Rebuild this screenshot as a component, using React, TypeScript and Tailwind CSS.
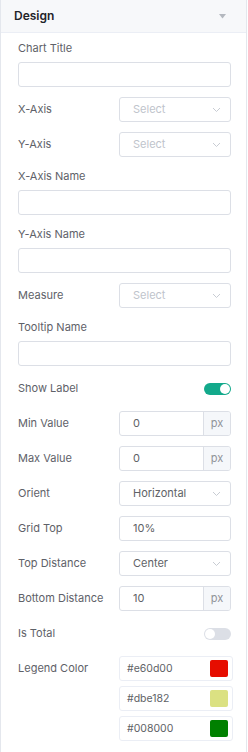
import React from "react";

const Chevron = () => (
  <svg width="9" height="6" viewBox="0 0 9 6" fill="none" className="shrink-0">
    <path d="M1 1l3.5 3.5L8 1" stroke="#c8ccd3" strokeWidth="1" />
  </svg>
);

const Label = ({ children }: { children: React.ReactNode }) => (
  <span className="text-[11px] text-[#5e6168]">{children}</span>
);

const TextInput = () => (
  <div className="h-[25px] w-full rounded-[3px] border border-[#dcdfe6] bg-white" />
);

const Select = ({ value }: { value?: string }) => (
  <div className="flex h-[25px] w-[112px] items-center justify-between rounded-[3px] border border-[#dcdfe6] bg-white pl-[13px] pr-[9px]">
    <span className={"text-[11px] " + (value ? "text-[#606266]" : "text-[#c0c4cc]")}>
      {value ?? "Select"}
    </span>
    <Chevron />
  </div>
);

const PxInput = ({ value }: { value: string }) => (
  <div className="flex h-[25px] w-[112px] overflow-hidden rounded-[3px] border border-[#dcdfe6] bg-white">
    <span className="flex flex-1 items-center pl-[13px] text-[11px] text-[#606266]">{value}</span>
    <span className="flex w-[27px] items-center justify-center border-l border-[#dcdfe6] bg-[#f5f7fa] text-[11px] text-[#909399]">
      px
    </span>
  </div>
);

const Toggle = ({ on }: { on: boolean }) => (
  <div
    className={
      "flex h-[12px] w-[27px] items-center rounded-full px-[1px] " +
      (on ? "justify-end bg-[#13a98b]" : "justify-start bg-[#dcdfe6]")
    }
  >
    <div className="h-[10px] w-[10px] rounded-full bg-white" />
  </div>
);

const Row = ({ label, children }: { label: string; children: React.ReactNode }) => (
  <div className="flex h-[25px] items-center justify-between">
    <Label>{label}</Label>
    {children}
  </div>
);

const Stacked = ({ label }: { label: string }) => (
  <div className="flex flex-col gap-[5px]">
    <div className="flex h-[18px] items-center">
      <Label>{label}</Label>
    </div>
    <TextInput />
  </div>
);

const ColorInput = ({ hex }: { hex: string }) => (
  <div className="flex h-[25px] w-[114px] items-center justify-between rounded-[3px] border border-[#ebeef5] bg-white pl-[7px] pr-[4px]">
    <span className="text-[10.5px] text-[#606266]">{hex}</span>
    <div className="h-[17px] w-[18px] rounded-[2px]" style={{ backgroundColor: hex }} />
  </div>
);

export default function App() {
  return (
    <div
      className="h-[752px] w-[247px] border-x border-[#e4e7ed] bg-white"
      style={{ fontFamily: "Inter, 'Noto Sans', sans-serif" }}
    >
      <div className="flex h-[33px] items-center justify-between border-b border-[#ebeef5] bg-[#f7f8fa] pl-[13px] pr-[20px]">
        <span className="text-[12px] font-semibold text-[#1f2329]">Design</span>
        <svg width="7" height="5" viewBox="0 0 7 5">
          <path d="M0 0h7L3.5 4.5z" fill="#b4b8bf" />
        </svg>
      </div>
      <div className="flex flex-col gap-[10px] pl-[17px] pr-[15px] pt-[6px]">
        <Stacked label="Chart Title" />
        <Row label="X-Axis">
          <Select />
        </Row>
        <Row label="Y-Axis">
          <Select />
        </Row>
        <Stacked label="X-Axis Name" />
        <Stacked label="Y-Axis Name" />
        <Row label="Measure">
          <Select />
        </Row>
        <Stacked label="Tooltip Name" />
        <Row label="Show Label">
          <Toggle on />
        </Row>
        <Row label="Min Value">
          <PxInput value="0" />
        </Row>
        <Row label="Max Value">
          <PxInput value="0" />
        </Row>
        <Row label="Orient">
          <Select value="Horizontal" />
        </Row>
        <Row label="Grid Top">
          <div className="flex h-[25px] w-[112px] items-center rounded-[3px] border border-[#dcdfe6] bg-white pl-[13px] text-[11px] text-[#606266]">
            10%
          </div>
        </Row>
        <Row label="Top Distance">
          <Select value="Center" />
        </Row>
        <Row label="Bottom Distance">
          <PxInput value="10" />
        </Row>
        <Row label="Is Total">
          <Toggle on={false} />
        </Row>
        <div className="flex items-start justify-between">
          <div className="flex h-[25px] items-center">
            <Label>Legend Color</Label>
          </div>
          <div className="-mr-[2px] flex flex-col gap-[5px]">
            <ColorInput hex="#e60d00" />
            <ColorInput hex="#dbe182" />
            <ColorInput hex="#008000" />
          </div>
        </div>
      </div>
    </div>
  );
}
